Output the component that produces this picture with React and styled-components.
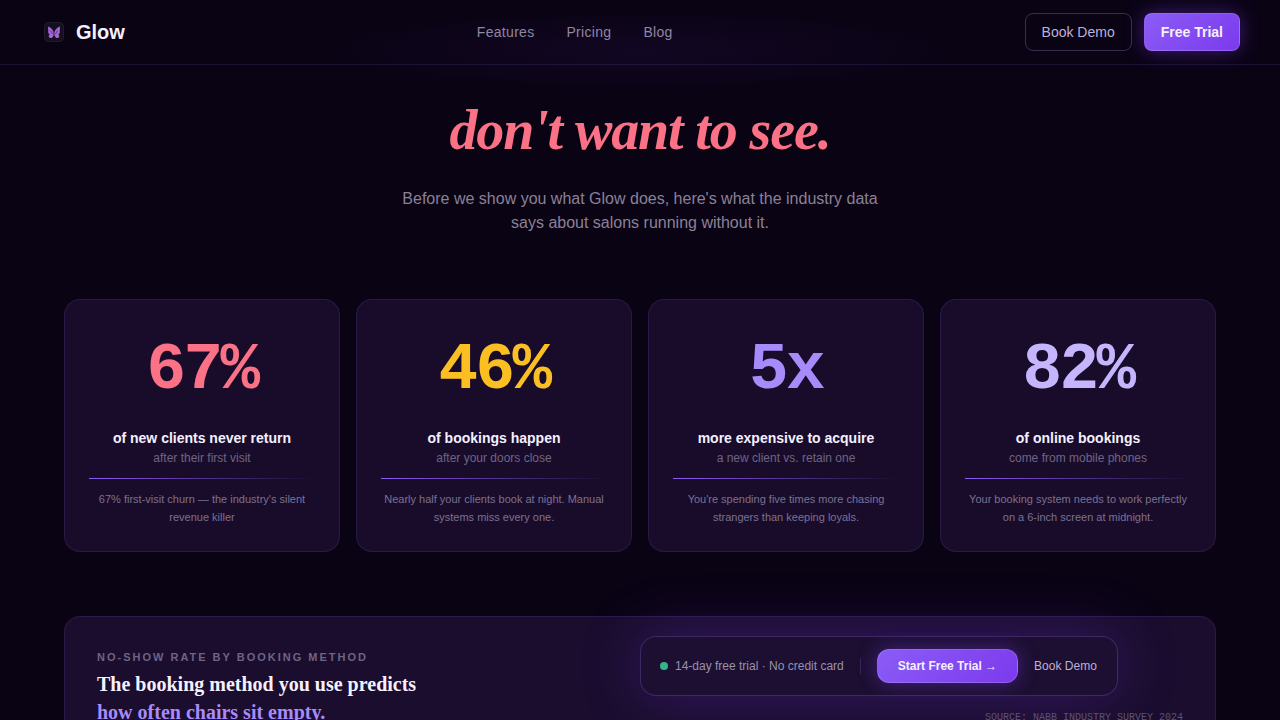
import React from 'react';
import styled, { createGlobalStyle } from 'styled-components';

const GlobalStyle = createGlobalStyle`
  html, body {
    margin: 0;
    height: 720px;
    overflow: hidden;
    background: #0a0314;
    font-family: "Liberation Sans", Arial, sans-serif;
  }
  * { box-sizing: border-box; }
`;

const Page = styled.div`
  position: relative;
  width: 1280px;
  height: 720px;
  overflow: hidden;
  background:
    radial-gradient(ellipse 320px 40px at 640px 50px, rgba(124, 58, 237, 0.07), transparent),
    #0a0314;
`;

const Nav = styled.header`
  display: flex;
  align-items: center;
  justify-content: space-between;
  height: 65px;
  padding: 0 40px;
  border-bottom: 1px solid rgba(155, 120, 255, 0.13);
`;

const Brand = styled.div`
  display: flex;
  align-items: center;
  gap: 8px;
  color: #f5f0ff;
  font-size: 20px;
  font-weight: 700;
`;

const NavLinks = styled.nav`
  display: flex;
  gap: 32px;
`;

const NavLink = styled.a`
  color: #8f86a3;
  font-size: 14px;
  letter-spacing: 0.3px;
`;

const NavActions = styled.div`
  display: flex;
  gap: 12px;
`;

const GhostButton = styled.button`
  height: 38px;
  padding: 0 16px;
  border: 1px solid rgba(190, 170, 255, 0.25);
  border-radius: 8px;
  background: transparent;
  color: #bdb0dc;
  font: 14px "Liberation Sans", Arial, sans-serif;
`;

const PrimaryButton = styled.button`
  height: ${({ $tall }) => ($tall ? '34px' : '38px')};
  padding: 0 ${({ $tall }) => ($tall ? '20px' : '16px')};
  border: 1px solid rgba(255, 255, 255, 0.15);
  border-radius: ${({ $tall }) => ($tall ? '12px' : '8px')};
  background: linear-gradient(135deg, #8b5cf6, #7c3aed);
  box-shadow: 0 0 20px rgba(124, 58, 237, 0.45);
  color: #f5f0ff;
  font: 700 ${({ $tall }) => ($tall ? '12px' : '14px')} "Liberation Sans", Arial, sans-serif;
`;

const Hero = styled.section`
  text-align: center;
`;

const Headline = styled.h1`
  margin: 0;
  padding-top: 33px;
  color: #fb7185;
  font: italic 700 56px/1.15 "Liberation Serif", "Times New Roman", serif;
  letter-spacing: -0.02em;
`;

const Lede = styled.p`
  margin: 25px 0 0;
  color: #8a8198;
  font-size: 16px;
  line-height: 24px;
`;

const CardGrid = styled.div`
  display: grid;
  grid-template-columns: repeat(4, 1fr);
  gap: 16px;
  margin: 64px 64px 0;
`;

const Card = styled.article`
  height: 253px;
  padding: 36px 24px 0;
  border: 1px solid rgba(155, 120, 255, 0.13);
  border-radius: 16px;
  background: #190c2b;
  text-align: center;
`;

const Stat = styled.div`
  color: ${({ $color }) => $color};
  font-family: "Liberation Mono", "Courier New", monospace;
  font-size: 66px;
  font-weight: 700;
  line-height: 70px;
  letter-spacing: -0.04em;
`;

const StatTitle = styled.div`
  margin-top: 22px;
  color: #f5f0ff;
  font-size: 14px;
  font-weight: 700;
  line-height: 20px;
`;

const StatSub = styled.div`
  color: #6e6484;
  font-size: 12px;
  line-height: 20px;
`;

const Rule = styled.div`
  height: 1px;
  margin: 10px 0 11px;
  background: linear-gradient(90deg, #8b5cf6, transparent);
`;

const StatNote = styled.p`
  margin: 0;
  color: #7b7190;
  font-size: 11px;
  line-height: 18px;
`;

const Panel = styled.section`
  display: flex;
  align-items: flex-start;
  justify-content: space-between;
  height: 200px;
  margin: 64px 64px 0;
  padding: 32px;
  border: 1px solid rgba(155, 120, 255, 0.13);
  border-radius: 16px;
  background: #1a0d2e;
`;

const Eyebrow = styled.div`
  color: #6e6484;
  font-size: 11px;
  font-weight: 700;
  line-height: 16px;
  letter-spacing: 2px;
`;

const PanelTitle = styled.h2`
  margin: 5px 0 0;
  color: #f5f0ff;
  font: 700 20px/28px "Liberation Serif", serif;
`;

const Accent = styled.span`
  color: #a78bfa;
`;

const Source = styled.div`
  margin-top: 63px;
  color: #5d5470;
  font: 10px/12px "Liberation Mono", monospace;
`;

const CtaBar = styled.div`
  position: absolute;
  top: 636px;
  left: 640px;
  display: flex;
  align-items: center;
  width: 478px;
  height: 60px;
  padding: 0 19px;
  border: 1px solid rgba(155, 120, 255, 0.25);
  border-radius: 16px;
  background: #1c0f31;
  box-shadow: 0 0 60px rgba(124, 58, 237, 0.28);
`;

const Dot = styled.span`
  width: 8px;
  height: 8px;
  margin-right: 7px;
  border-radius: 50%;
  background: #34b28a;
`;

const CtaText = styled.span`
  color: #9a91ad;
  font-size: 12px;
`;

const Divider = styled.span`
  width: 1px;
  height: 16px;
  margin: 0 16px;
  background: rgba(155, 120, 255, 0.2);
`;

const TextLink = styled.a`
  margin-left: 16px;
  color: #bdb0dc;
  font-size: 12px;
`;

const Logo = () => (
  <svg width="28" height="28" viewBox="0 0 28 28" fill="none">
    <rect x="4.5" y="4.5" width="19" height="19" rx="4" fill="#15101f" stroke="#221a2e" />
    <path d="M8 8.5c2.5.8 4.6 2.8 5.6 5.5v3.4l-1.7 2.6c-1.6.4-3-.4-3.3-2l1-1.4-1.3-1.6z" fill="#a365d8" />
    <path d="M20 8.5c-2.5.8-4.6 2.8-5.6 5.5v3.4l1.7 2.6c1.6.4 3-.4 3.3-2l-1-1.4 1.3-1.6z" fill="#a365d8" />
    <path d="M10.5 12.5l2 3.5M17.5 12.5l-2 3.5" stroke="#5f3a8a" />
  </svg>
);

const stats = [
  { value: '67%', color: '#fb7185', title: 'of new clients never return', sub: 'after their first visit', note: "67% first-visit churn — the industry's silent revenue killer" },
  { value: '46%', color: '#fbbf24', title: 'of bookings happen', sub: 'after your doors close', note: 'Nearly half your clients book at night. Manual systems miss every one.' },
  { value: '5x', color: '#a78bfa', title: 'more expensive to acquire', sub: 'a new client vs. retain one', note: "You're spending five times more chasing strangers than keeping loyals." },
  { value: '82%', color: '#c4b5fd', title: 'of online bookings', sub: 'come from mobile phones', note: 'Your booking system needs to work perfectly on a 6-inch screen at midnight.' },
];

export default function App() {
  return (
    <Page>
      <GlobalStyle />
      <Nav>
        <Brand><Logo />Glow</Brand>
        <NavLinks>
          <NavLink>Features</NavLink>
          <NavLink>Pricing</NavLink>
          <NavLink>Blog</NavLink>
        </NavLinks>
        <NavActions>
          <GhostButton>Book Demo</GhostButton>
          <PrimaryButton>Free Trial</PrimaryButton>
        </NavActions>
      </Nav>
      <Hero>
        <Headline>don't want to see.</Headline>
        <Lede>Before we show you what Glow does, here's what the industry data<br />says about salons running without it.</Lede>
      </Hero>
      <CardGrid>
        {stats.map(s => (
          <Card key={s.value}>
            <Stat $color={s.color}>{s.value}</Stat>
            <StatTitle>{s.title}</StatTitle>
            <StatSub>{s.sub}</StatSub>
            <Rule />
            <StatNote>{s.note}</StatNote>
          </Card>
        ))}
      </CardGrid>
      <Panel>
        <div>
          <Eyebrow>NO-SHOW RATE BY BOOKING METHOD</Eyebrow>
          <PanelTitle>The booking method you use predicts<br /><Accent>how often chairs sit empty.</Accent></PanelTitle>
        </div>
        <Source>SOURCE: NABB INDUSTRY SURVEY 2024</Source>
      </Panel>
      <CtaBar>
        <Dot />
        <CtaText>14-day free trial · No credit card</CtaText>
        <Divider />
        <PrimaryButton $tall>Start Free Trial →</PrimaryButton>
        <TextLink>Book Demo</TextLink>
      </CtaBar>
    </Page>
  );
}
